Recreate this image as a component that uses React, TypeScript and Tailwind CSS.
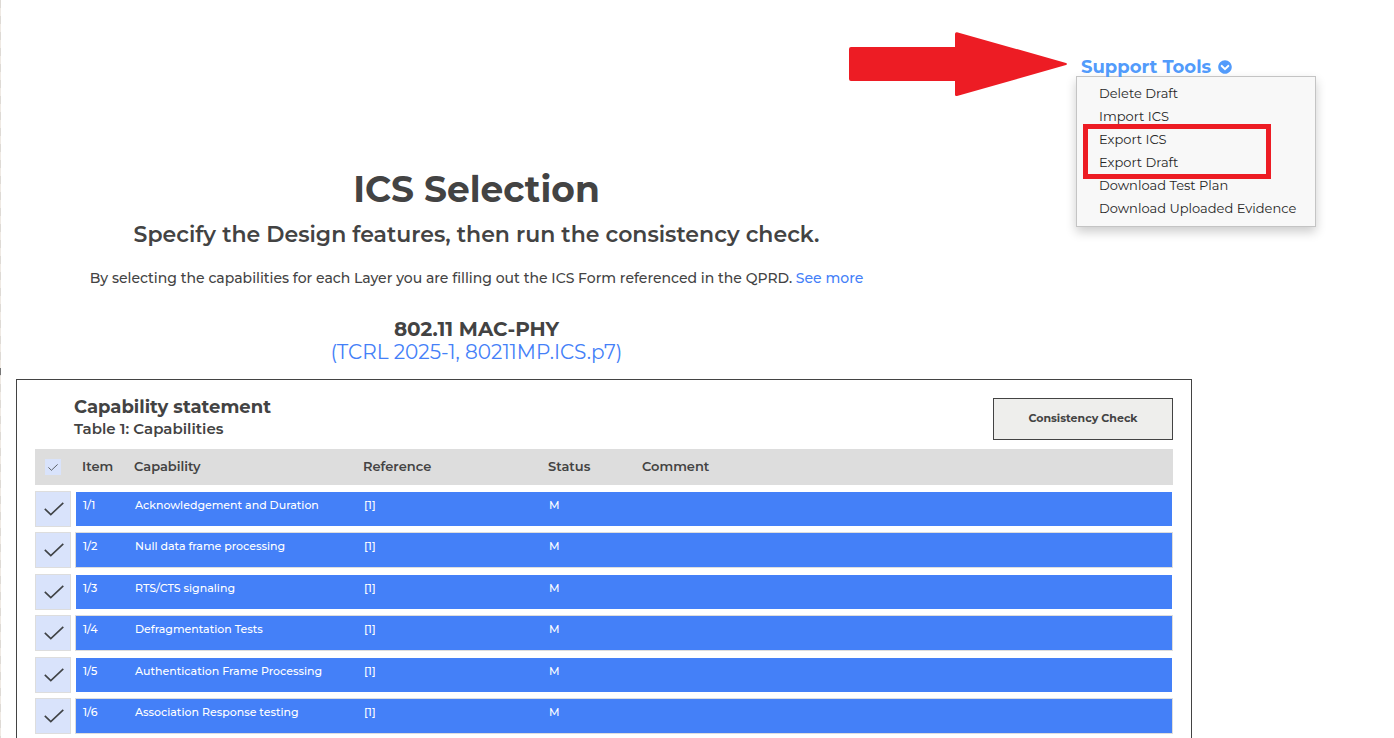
import { FaChevronCircleDown } from "react-icons/fa";

const menuItems = [
  "Delete Draft",
  "Import ICS",
  "Export ICS",
  "Export Draft",
  "Download Test Plan",
  "Download Uploaded Evidence",
];

const capabilities = [
  { item: "1/1", name: "Acknowledgement and Duration", reference: "[1]", status: "M" },
  { item: "1/2", name: "Null data frame processing", reference: "[1]", status: "M" },
  { item: "1/3", name: "RTS/CTS signaling", reference: "[1]", status: "M" },
  { item: "1/4", name: "Defragmentation Tests", reference: "[1]", status: "M" },
  { item: "1/5", name: "Authentication Frame Processing", reference: "[1]", status: "M" },
  { item: "1/6", name: "Association Response testing", reference: "[1]", status: "M" },
];

const rowGrid = "grid grid-cols-[40px_59px_229fr_185fr_94fr_531fr]";

function Check({ className }: { className: string }) {
  return (
    <svg viewBox="0 0 20 14" fill="none" stroke="#3f4245" className={className} aria-hidden="true">
      <path d="M0.8 6.8 L6.8 12.6 L19.3 0.8" strokeWidth="1.6" />
    </svg>
  );
}

function SupportTools() {
  return (
    <div className="relative w-60">
      <button type="button" className="relative z-10 flex h-[30px] items-center gap-[7px] pl-[5px] text-lg font-bold whitespace-nowrap text-[#529bfb]">
        Support Tools
        <FaChevronCircleDown className="size-[14px]" />
      </button>
      <svg
        viewBox="0 0 220 66"
        className="absolute top-[-21px] right-full mr-2 h-[66px] w-[220px]"
        aria-hidden="true"
      >
        <path
          d="M2 16 H107 V3 Q107 1 109 1.200 L218 32 Q220 33 218 34 L109 65 Q107 65.500 107 63.500 V50 H3 Q1 50 1 48 V18 Q1 16 3 16 Z"
          fill="#ed1c24"
        />
      </svg>
      <ul className="absolute top-6 left-0 w-full border border-[#c4c4c4] bg-[#f8f8f8] pt-1 pb-[7px] shadow-[0_5px_10px_rgba(0,0,0,0.2)]">
        {menuItems.map((label) => (
          <li key={label} className="flex h-[23px] items-center pl-[22px]">
            <a href="#" className="text-[13px] leading-5 whitespace-nowrap text-[#272727]">
              {label}
            </a>
          </li>
        ))}
      </ul>
      <div className="pointer-events-none absolute top-[72px] left-[7px] h-[55px] w-[188px] border-5 border-[#ed1c24]" />
    </div>
  );
}

export default function App() {
  return (
    <div className="flex min-h-screen bg-white font-[Montserrat,Inter,sans-serif] text-[#434343]">
      <div className="w-px shrink-0 bg-[repeating-linear-gradient(#dedad5_0_8px,#efe9e3_8px_16px)]">
        <div className="mt-[368px] h-[7px] bg-[#777]" />
      </div>
      <main className="flex min-w-0 flex-1 flex-col pl-[15px]">
        <header className="flex justify-end pt-[52px] pr-[78px]">
          <SupportTools />
        </header>

        <section className="mr-[457px] pt-[82px] text-center">
          <h1 className="text-4xl leading-[50px] font-bold">ICS Selection</h1>
          <h2 className="mt-[6px] text-[22px] leading-[30px] font-semibold">
            Specify the Design features, then run the consistency check.
          </h2>
          <p className="mt-[18px] text-sm leading-5 font-medium">
            By selecting the capabilities for each Layer you are filling out the ICS Form referenced in the QPRD.{" "}
            <a href="#" className="text-[#4480f8]">See more</a>
          </p>
          <h3 className="mt-[29px] text-xl leading-6 font-bold">802.11 MAC-PHY</h3>
          <a href="#" className="block text-xl leading-[22px] text-[#4480f8]">
            (TCRL 2025-1, 80211MP.ICS.p7)
          </a>
        </section>

        <section className="mt-4 mr-[202px] grow border border-b-0 border-[#434343] px-[18px] pt-[18px]">
          <div className="flex h-[51px] items-start justify-between">
            <div className="pl-[39px]">
              <h4 className="-mt-[3px] text-lg leading-6 font-bold">Capability statement</h4>
              <p className="text-[15px] leading-5 font-semibold">Table 1: Capabilities</p>
            </div>
            <button
              type="button"
              className="h-[42px] w-[180px] border border-[#434343] bg-[#eeeeec] pb-[2px] text-[11px] font-bold"
            >
              Consistency Check
            </button>
          </div>

          <table className="block w-full text-left">
            <thead className="block">
              <tr className={`${rowGrid} h-9 items-center bg-[#dddddd] text-[13px] leading-5`}>
                <th className="pl-[10px]">
                  <label className="relative block size-4">
                    <input type="checkbox" defaultChecked aria-label="Select all" className="block size-4 appearance-none bg-[#d9e3fb]" />
                    <Check className="pointer-events-none absolute top-[5px] left-[3px] h-[7px] w-[10px]" />
                  </label>
                </th>
                <th className="pb-[2px] pl-[7px] font-semibold">Item</th>
                <th className="pb-[2px] font-semibold">Capability</th>
                <th className="pb-[2px] font-semibold">Reference</th>
                <th className="pb-[2px] font-semibold">Status</th>
                <th className="pb-[2px] font-semibold">Comment</th>
              </tr>
            </thead>
            <tbody className="block pt-[6px] text-[11px] leading-4 font-medium text-white">
              {capabilities.map((row) => (
                <tr key={row.item} className={`${rowGrid} group mb-[5px] h-9 even:mb-[6px]`}>
                  <td className="pr-1">
                    <label className="relative block size-9">
                      <input
                        type="checkbox"
                        defaultChecked
                        aria-label={row.name}
                        className="block size-9 appearance-none border border-[#dddddd] bg-[#d9e3fb]"
                      />
                      <Check className="pointer-events-none absolute top-[11px] left-[9px] h-[14px] w-5" />
                    </label>
                  </td>
                  <td className="border-y border-l border-white bg-[#4480f8] pt-[5px] pl-[7px] group-even:border-[#dddddd]">{row.item}</td>
                  <td className="border-y border-white bg-[#4480f8] pt-[5px] pl-px group-even:border-[#dddddd]">{row.name}</td>
                  <td className="border-y border-white bg-[#4480f8] pt-[5px] pl-px group-even:border-[#dddddd]">{row.reference}</td>
                  <td className="border-y border-white bg-[#4480f8] pt-[5px] pl-px group-even:border-[#dddddd]">{row.status}</td>
                  <td className="border-y border-r border-white bg-[#4480f8] pt-[5px] group-even:border-[#dddddd]" />
                </tr>
              ))}
            </tbody>
          </table>
        </section>
      </main>
    </div>
  );
}
